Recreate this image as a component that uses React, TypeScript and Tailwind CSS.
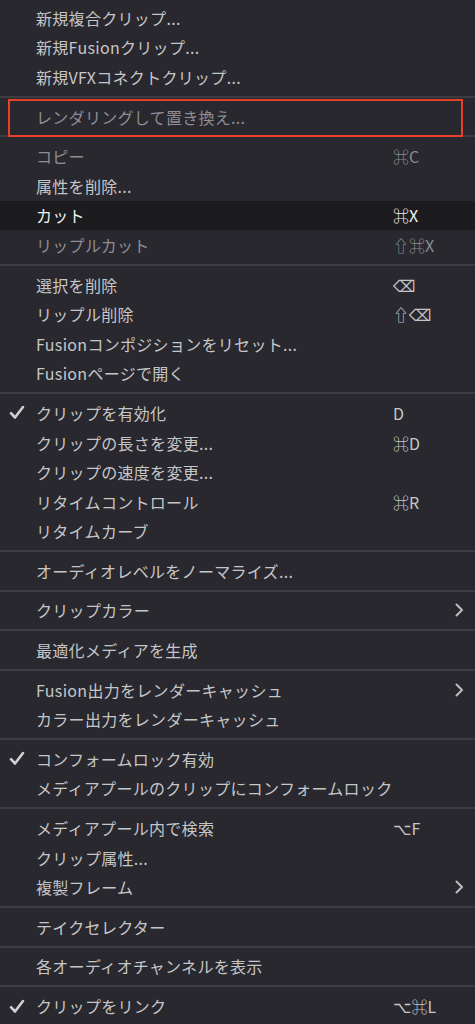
import React from 'react';

type Item = {
  label: string;
  shortcut?: string;
  checked?: boolean;
  submenu?: boolean;
  disabled?: boolean;
  active?: boolean;
  marked?: boolean;
};

// groups are split by separators
const groups: Item[][] = [
  [
    { label: '新規複合クリップ...' },
    { label: '新規Fusionクリップ...' },
    { label: '新規VFXコネクトクリップ...' },
  ],
  [{ label: 'レンダリングして置き換え...', disabled: true, marked: true }],
  [
    { label: 'コピー', shortcut: '⌘C', disabled: true },
    { label: '属性を削除...' },
    { label: 'カット', shortcut: '⌘X', active: true },
    { label: 'リップルカット', shortcut: '⇧⌘X', disabled: true },
  ],
  [
    { label: '選択を削除', shortcut: '⌫' },
    { label: 'リップル削除', shortcut: '⇧⌫' },
    { label: 'Fusionコンポジションをリセット...' },
    { label: 'Fusionページで開く' },
  ],
  [
    { label: 'クリップを有効化', shortcut: 'D', checked: true },
    { label: 'クリップの長さを変更...', shortcut: '⌘D' },
    { label: 'クリップの速度を変更...' },
    { label: 'リタイムコントロール', shortcut: '⌘R' },
    { label: 'リタイムカーブ' },
  ],
  [{ label: 'オーディオレベルをノーマライズ...' }],
  [{ label: 'クリップカラー', submenu: true }],
  [{ label: '最適化メディアを生成' }],
  [
    { label: 'Fusion出力をレンダーキャッシュ', submenu: true },
    { label: 'カラー出力をレンダーキャッシュ' },
  ],
  [
    { label: 'コンフォームロック有効', checked: true },
    { label: 'メディアプールのクリップにコンフォームロック' },
  ],
  [
    { label: 'メディアプール内で検索', shortcut: '⌥F' },
    { label: 'クリップ属性...' },
    { label: '複製フレーム', submenu: true },
  ],
  [{ label: 'テイクセレクター' }],
  [{ label: '各オーディオチャンネルを表示' }],
  [{ label: 'クリップをリンク', shortcut: '⌥⌘L', checked: true }],
];

const Check = () => (
  <svg width="16" height="15" viewBox="0 0 16 15" fill="none">
    <path d="M2 8.2 L6 12.5 L14 2" stroke="currentColor" strokeWidth="2.6" strokeLinecap="round" strokeLinejoin="round" />
  </svg>
);

const Chevron = () => (
  <svg width="9" height="14" viewBox="0 0 9 14" fill="none">
    <path d="M1.5 1.5 L7 7 L1.5 12.5" stroke="currentColor" strokeWidth="2" strokeLinecap="round" strokeLinejoin="round" />
  </svg>
);

const Row: React.FC<{ item: Item }> = ({ item }) => {
  const color = item.active
    ? 'text-[#f2f2f2]'
    : item.disabled
    ? 'text-[#8e8e92]'
    : 'text-[#c6c6c8]';
  return (
    <div
      className={`relative flex items-center h-[29.6px] ${color} ${item.active ? 'bg-[#1c1c1e]' : ''}`}
    >
      <div className="w-[36px] pl-[9px] flex items-center text-[#d0d0d2]">
        {item.checked && <Check />}
      </div>
      <div className="flex-1 leading-none whitespace-nowrap tracking-[0.3px]">{item.label}</div>
      <div className="w-[57px] leading-none whitespace-nowrap">{item.shortcut}</div>
      <div className="w-[25px] pl-[5px] flex items-center text-[#bdbdbf]">
        {item.submenu && <Chevron />}
      </div>
      {item.marked && (
        <div className="absolute left-[8px] right-[12px] -top-[3px] -bottom-[6px] border-2 border-[#e8412a]" />
      )}
    </div>
  );
};

export default function App() {
  return (
    <div
      className="w-[475px] h-[1024px] overflow-hidden bg-[#28282e] pt-[3px] text-[16px]"
      style={{ fontFamily: '"Noto Sans CJK JP", "DejaVu Sans", sans-serif' }}
    >
      {groups.map((group, gi) => (
        <React.Fragment key={gi}>
          {gi > 0 && (
            <div className="h-[10px] flex items-center">
              <div className="w-full h-[2px] bg-[#3c3c42]" />
            </div>
          )}
          {group.map((item, ii) => (
            <Row key={ii} item={item} />
          ))}
        </React.Fragment>
      ))}
    </div>
  );
}
